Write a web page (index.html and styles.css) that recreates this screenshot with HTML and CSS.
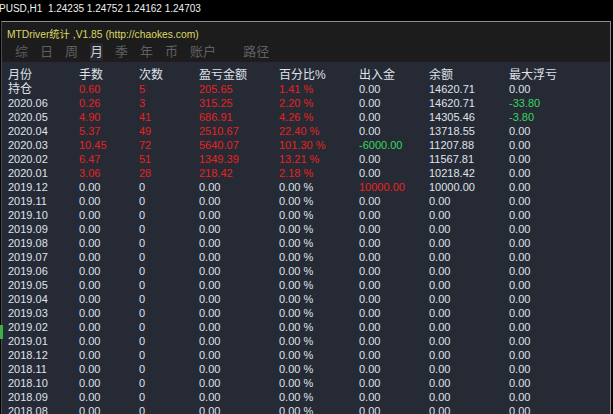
FILE: index.html
```html
<!DOCTYPE html>
<html lang="zh">
<head>
    <meta charset="UTF-8">
    <title>MTDriver统计</title>
    <link rel="stylesheet" href="styles.css">
</head>
<body>
    <div class="quote">PUSD,H1&nbsp; 1.24235 1.24752 1.24162 1.24703</div>
    <div class="panel">
        <div class="panel_head">
            <div class="title">MTDriver统计 ,V1.85 (http://chaokes.com)</div>
            <div class="tabs">
                <span>综</span><span>日</span><span>周</span><span class="on">月</span><span>季</span><span>年</span><span>币</span><span class="wide">账户</span><span>路径</span>
            </div>
        </div>
        <div class="grid">
            <div class="row head"><span>月份</span><span>手数</span><span>次数</span><span>盈亏金额</span><span>百分比%</span><span>出入金</span><span>余额</span><span>最大浮亏</span></div>
            <div class="row"><span class="cn">持仓</span><span class="red">0.60</span><span class="red">5</span><span class="red">205.65</span><span class="red">1.41 %</span><span>0.00</span><span>14620.71</span><span>0.00</span></div>
            <div class="row"><span>2020.06</span><span class="red">0.26</span><span class="red">3</span><span class="red">315.25</span><span class="red">2.20 %</span><span>0.00</span><span>14620.71</span><span class="green">-33.80</span></div>
            <div class="row"><span>2020.05</span><span class="red">4.90</span><span class="red">41</span><span class="red">686.91</span><span class="red">4.26 %</span><span>0.00</span><span>14305.46</span><span class="green">-3.80</span></div>
            <div class="row"><span>2020.04</span><span class="red">5.37</span><span class="red">49</span><span class="red">2510.67</span><span class="red">22.40 %</span><span>0.00</span><span>13718.55</span><span>0.00</span></div>
            <div class="row"><span>2020.03</span><span class="red">10.45</span><span class="red">72</span><span class="red">5640.07</span><span class="red">101.30 %</span><span class="green">-6000.00</span><span>11207.88</span><span>0.00</span></div>
            <div class="row"><span>2020.02</span><span class="red">6.47</span><span class="red">51</span><span class="red">1349.39</span><span class="red">13.21 %</span><span>0.00</span><span>11567.81</span><span>0.00</span></div>
            <div class="row"><span>2020.01</span><span class="red">3.06</span><span class="red">28</span><span class="red">218.42</span><span class="red">2.18 %</span><span>0.00</span><span>10218.42</span><span>0.00</span></div>
            <div class="row"><span>2019.12</span><span>0.00</span><span>0</span><span>0.00</span><span>0.00 %</span><span class="red">10000.00</span><span>10000.00</span><span>0.00</span></div>
            <div class="row"><span>2019.11</span><span>0.00</span><span>0</span><span>0.00</span><span>0.00 %</span><span>0.00</span><span>0.00</span><span>0.00</span></div>
            <div class="row"><span>2019.10</span><span>0.00</span><span>0</span><span>0.00</span><span>0.00 %</span><span>0.00</span><span>0.00</span><span>0.00</span></div>
            <div class="row"><span>2019.09</span><span>0.00</span><span>0</span><span>0.00</span><span>0.00 %</span><span>0.00</span><span>0.00</span><span>0.00</span></div>
            <div class="row"><span>2019.08</span><span>0.00</span><span>0</span><span>0.00</span><span>0.00 %</span><span>0.00</span><span>0.00</span><span>0.00</span></div>
            <div class="row"><span>2019.07</span><span>0.00</span><span>0</span><span>0.00</span><span>0.00 %</span><span>0.00</span><span>0.00</span><span>0.00</span></div>
            <div class="row"><span>2019.06</span><span>0.00</span><span>0</span><span>0.00</span><span>0.00 %</span><span>0.00</span><span>0.00</span><span>0.00</span></div>
            <div class="row"><span>2019.05</span><span>0.00</span><span>0</span><span>0.00</span><span>0.00 %</span><span>0.00</span><span>0.00</span><span>0.00</span></div>
            <div class="row"><span>2019.04</span><span>0.00</span><span>0</span><span>0.00</span><span>0.00 %</span><span>0.00</span><span>0.00</span><span>0.00</span></div>
            <div class="row"><span>2019.03</span><span>0.00</span><span>0</span><span>0.00</span><span>0.00 %</span><span>0.00</span><span>0.00</span><span>0.00</span></div>
            <div class="row"><span>2019.02</span><span>0.00</span><span>0</span><span>0.00</span><span>0.00 %</span><span>0.00</span><span>0.00</span><span>0.00</span></div>
            <div class="row"><span>2019.01</span><span>0.00</span><span>0</span><span>0.00</span><span>0.00 %</span><span>0.00</span><span>0.00</span><span>0.00</span></div>
            <div class="row"><span>2018.12</span><span>0.00</span><span>0</span><span>0.00</span><span>0.00 %</span><span>0.00</span><span>0.00</span><span>0.00</span></div>
            <div class="row"><span>2018.11</span><span>0.00</span><span>0</span><span>0.00</span><span>0.00 %</span><span>0.00</span><span>0.00</span><span>0.00</span></div>
            <div class="row"><span>2018.10</span><span>0.00</span><span>0</span><span>0.00</span><span>0.00 %</span><span>0.00</span><span>0.00</span><span>0.00</span></div>
            <div class="row"><span>2018.09</span><span>0.00</span><span>0</span><span>0.00</span><span>0.00 %</span><span>0.00</span><span>0.00</span><span>0.00</span></div>
            <div class="row"><span>2018.08</span><span>0.00</span><span>0</span><span>0.00</span><span>0.00 %</span><span>0.00</span><span>0.00</span><span>0.00</span></div>
        </div>
    </div>
    <!-- 图表左侧的价格标签 -->
    <div class="price_tag"></div>
</body>
</html>
```

FILE: styles.css
```css
html,body {
    margin: 0;
    padding: 0;
}
body {
    width: 613px;
    height: 414px;
    overflow: hidden;
    background-color: #000000;
    font-family: 'Liberation Sans', 'Noto Sans CJK SC', sans-serif;
    position: relative;
}
.quote {
    height: 21px;
    line-height: 17px;
    padding-left: 0;
    margin-left: -1px;
    font-size: 10px;
    color: #f0f0f0;
    white-space: nowrap;
}
.panel {
    margin-left: 1px;
    width: 610px;
    height: 393px;
    border-top: 1px solid #8a8a8a;
    border-left: 1px solid #4a4a4a;
    border-right: 1px solid #8c8c96;
    box-sizing: border-box;
}
.panel_head {
    height: 40px;
    background-color: #1c1c1d;
    background-image: linear-gradient(#1c1c1d 70%, #211b1c);
}
.title {
    padding-left: 5px;
    padding-top: 4px;
    height: 17px;
    line-height: 17px;
    font-size: 10.3px;
    color: #dcd862;
    white-space: nowrap;
}
.tabs {
    padding-left: 13px;
    display: flex;
    height: 18px;
    line-height: 18px;
    font-size: 13px;
    color: #606064;
}
.tabs span {
    margin-right: 12px;
}
.tabs .on {
    color: #c8ccd2;
    background-color: #26282e;
}
.tabs .wide {
    margin-right: 27px;
}
.grid {
    background-color: #262a35;
    height: 353px;
    padding-top: 6px;
    padding-left: 6px;
    box-sizing: border-box;
}
.row {
    display: grid;
    grid-template-columns: 70px 60px 60px 80px 80px 70px 80px 1fr;
    height: 14px;
    line-height: 14px;
    font-size: 11px;
    color: #dfe2ea;
    white-space: nowrap;
}
.row span + span {
    padding-left: 1px;
}
.row.head,.row .cn {
    font-size: 12px;
}
.red {
    color: #e8221e;
}
.green {
    color: #36d65c;
}
.price_tag {
    position: absolute;
    left: 0;
    top: 325px;
    width: 3px;
    height: 14px;
    background-color: #3cb043;
}
```
